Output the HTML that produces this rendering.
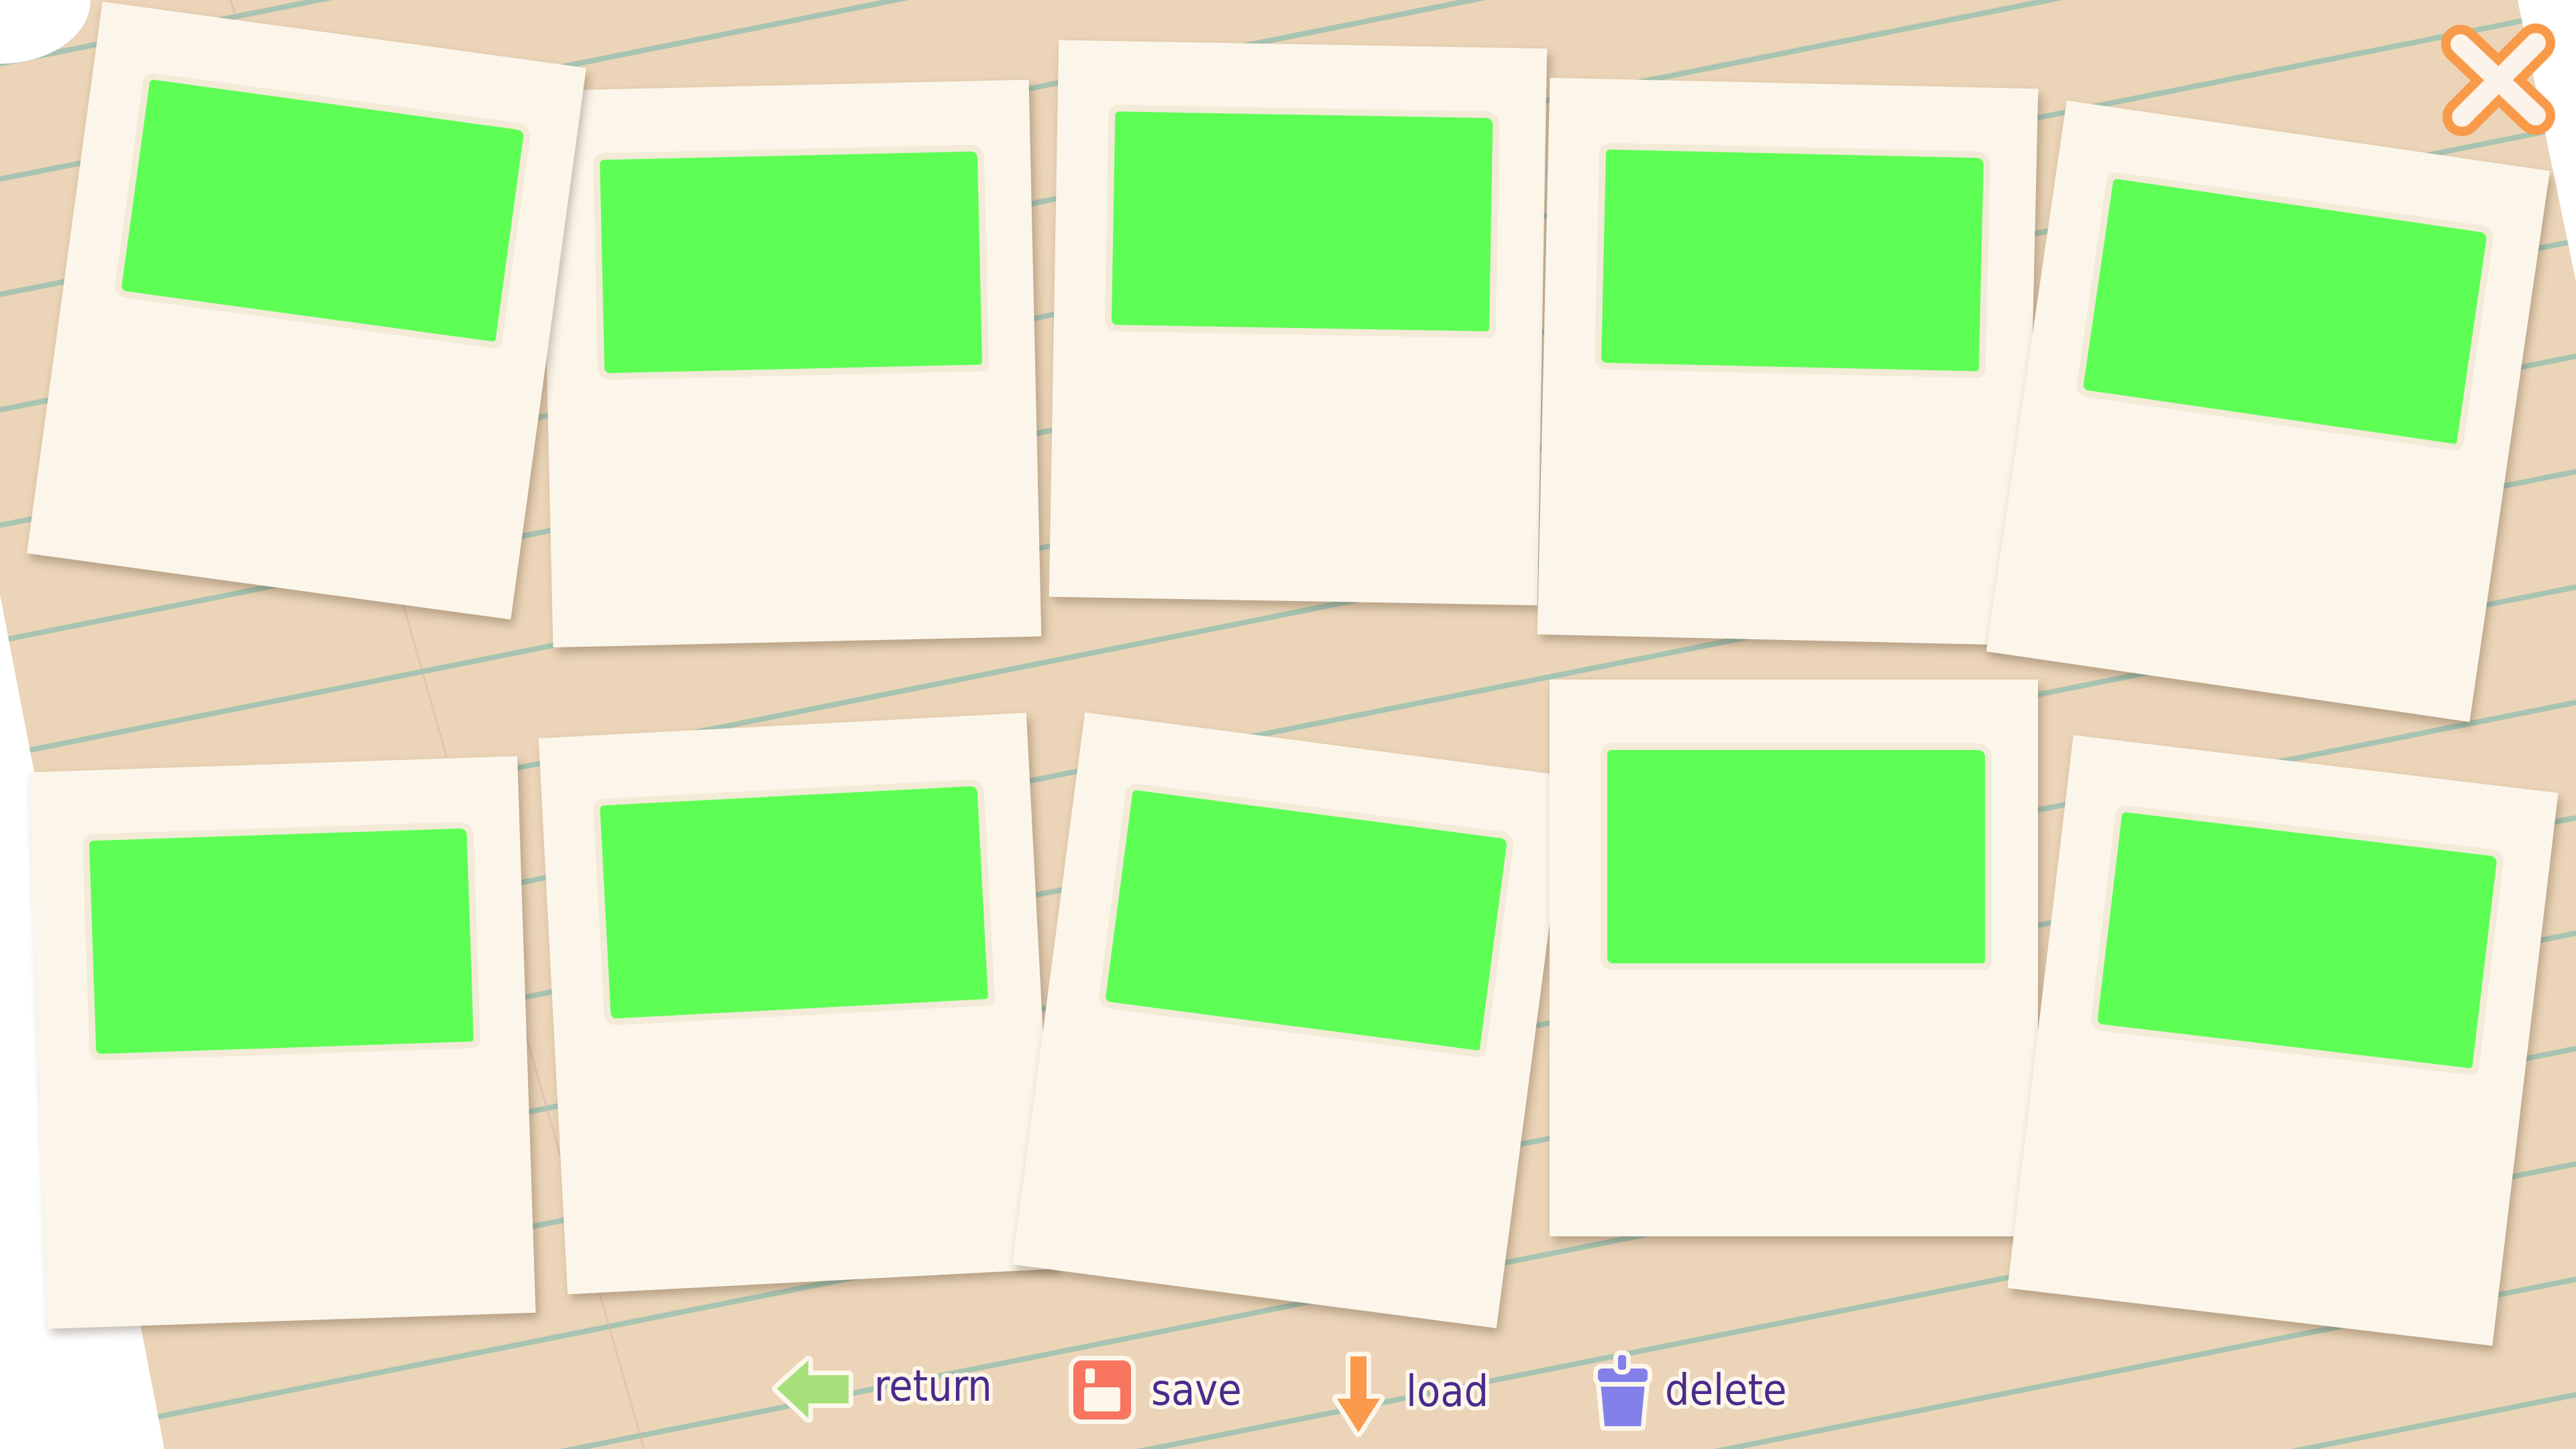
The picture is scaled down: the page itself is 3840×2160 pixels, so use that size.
<!DOCTYPE html>
<html><head><meta charset="utf-8"><style>
html,body{margin:0;padding:0;width:3840px;height:2160px;overflow:hidden;background:#fff;position:relative}
.c{position:absolute;width:728px;height:830px;background:#fcf6ea;box-shadow:5px 8px 14px rgba(60,40,20,.3);}
.g{position:absolute;left:86px;top:105px;width:563px;height:318px;background:#5dff55;box-shadow:0 0 0 10px #f3ead8;border-radius:6px 10px 4px 8px}
</style></head><body>
<svg width="3840" height="2160" style="position:absolute;left:0;top:0">
<defs><clipPath id="p"><polygon points="0,0 3753,0 3840,420 3840,2160 245,2160 0,886"/></clipPath></defs>
<rect width="3840" height="2160" fill="#fff"/>
<polygon points="0,0 3753,0 3840,420 3840,2160 245,2160 0,886" fill="#ebd4b7"/>
<g clip-path="url(#p)" stroke="#9cc2b2" stroke-width="8" opacity=".85">
<line x1="0" y1="95" x2="3840" y2="-673"/>
<line x1="0" y1="267" x2="3840" y2="-501"/>
<line x1="0" y1="439" x2="3840" y2="-329"/>
<line x1="0" y1="611" x2="3840" y2="-157"/>
<line x1="0" y1="783" x2="3840" y2="15"/>
<line x1="0" y1="955" x2="3840" y2="187"/>
<line x1="0" y1="1127" x2="3840" y2="359"/>
<line x1="0" y1="1299" x2="3840" y2="531"/>
<line x1="0" y1="1471" x2="3840" y2="703"/>
<line x1="0" y1="1643" x2="3840" y2="875"/>
<line x1="0" y1="1815" x2="3840" y2="1047"/>
<line x1="0" y1="1987" x2="3840" y2="1219"/>
<line x1="0" y1="2159" x2="3840" y2="1391"/>
<line x1="0" y1="2331" x2="3840" y2="1563"/>
<line x1="0" y1="2503" x2="3840" y2="1735"/>
<line x1="0" y1="2675" x2="3840" y2="1907"/>
<line x1="0" y1="2847" x2="3840" y2="2079"/>
<line x1="0" y1="3019" x2="3840" y2="2251"/>
</g>
<line x1="344" y1="0" x2="960" y2="2160" stroke="#dcb3b0" stroke-width="3" opacity=".5" clip-path="url(#p)"/>
<ellipse cx="0" cy="0" rx="135" ry="95" fill="#fff"/>
</svg>

<div class="c" style="left:815px;top:127px;transform:rotate(-1.3deg)"><div class="g"></div></div>
<div class="c" style="left:93px;top:48px;transform:rotate(7.8deg)"><div class="g"></div></div>
<div class="c" style="left:1571px;top:66px;transform:rotate(1deg)"><div class="g"></div></div>
<div class="c" style="left:2301px;top:124px;transform:rotate(1.3deg)"><div class="g"></div></div>
<div class="c" style="left:3017px;top:198px;transform:rotate(8.3deg)"><div class="g"></div></div>
<div class="c" style="left:57px;top:1139px;transform:rotate(-1.9deg)"><div class="g"></div></div>
<div class="c" style="left:824px;top:1081px;transform:rotate(-3deg)"><div class="g"></div></div>
<div class="c" style="left:1560px;top:1106px;transform:rotate(7.5deg)"><div class="g"></div></div>
<div class="c" style="left:2310px;top:1013px;"><div class="g"></div></div>
<div class="c" style="left:3039px;top:1136px;transform:rotate(6.8deg)"><div class="g"></div></div>

<svg width="3840" height="2160" style="position:absolute;left:0;top:0">
<g stroke-linecap="round" stroke-linejoin="round">
<line x1="3668" y1="66" x2="3780" y2="172" stroke="#f99a4a" stroke-width="58"/>
<line x1="3780" y1="64" x2="3670" y2="174" stroke="#f99a4a" stroke-width="58"/>
<line x1="3668" y1="66" x2="3780" y2="172" stroke="#fcf3ea" stroke-width="30"/>
<line x1="3780" y1="64" x2="3670" y2="174" stroke="#fcf3ea" stroke-width="30"/>
</g>
<g stroke="#fdf6ea" stroke-width="14" stroke-linejoin="round" paint-order="stroke">
<polygon points="1158,2070 1205,2028 1205,2050 1265,2050 1265,2092 1205,2092 1205,2114" fill="#a6e07a"/>
<rect x="1600" y="2028" width="86" height="88" rx="12" fill="#f87560"/>
<polygon points="2013,2022 2037,2022 2037,2085 2057,2085 2025,2135 1993,2085 2013,2085" fill="#fb9a4c"/>
<polygon points="2386,2062 2452,2062 2446,2126 2392,2126" fill="#8480ea"/>
<rect x="2382" y="2040" width="74" height="20" rx="6" fill="#8480ea"/>
<rect x="2412" y="2020" width="12" height="22" rx="4" fill="#8480ea"/>
</g>
<rect x="1616" y="2068" width="54" height="36" rx="4" fill="#fdf6ea"/>
<rect x="1618" y="2040" width="14" height="22" rx="3" fill="#fdf6ea"/>
<g font-family="DejaVu Sans Condensed, DejaVu Sans, sans-serif" font-size="64" fill="#4b2a8c" stroke="#fdf6ea" stroke-width="12" paint-order="stroke" stroke-linejoin="round">
<text x="1303" y="2088">return</text>
<text x="1716" y="2094">save</text>
<text x="2096" y="2096">load</text>
<text x="2482" y="2094">delete</text>
</g>
</svg>
</body></html>
